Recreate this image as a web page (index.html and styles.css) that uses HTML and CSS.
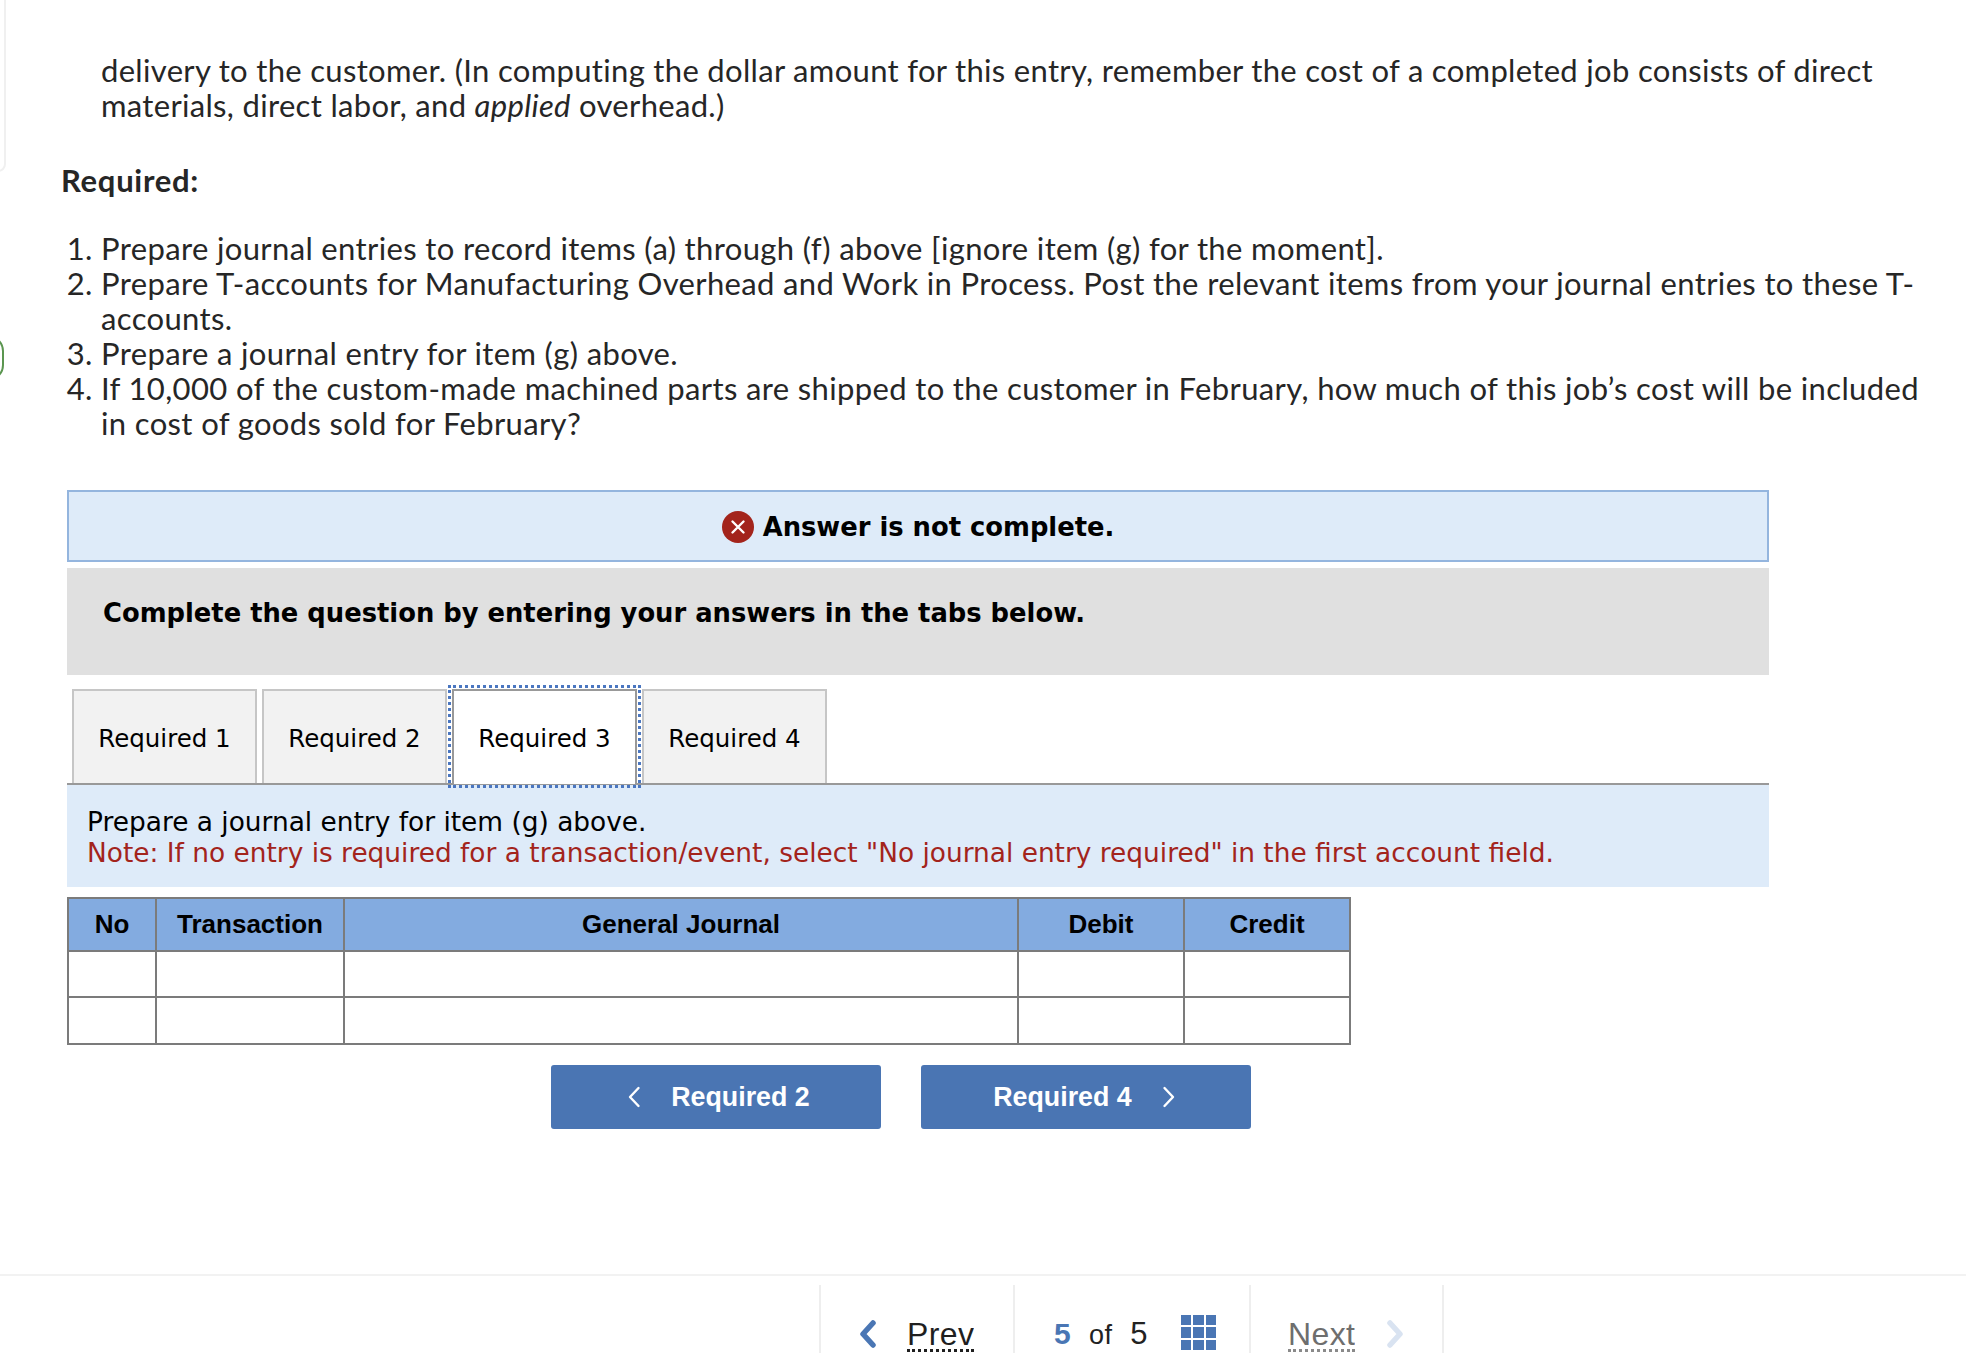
FILE: index.html
```html
<!DOCTYPE html>
<html lang="en">
<head>
<meta charset="utf-8">
<title>Required</title>
<link rel="stylesheet" href="styles.css">
</head>
<body>
<div class="edge-box"></div>
<div class="edge-arc"></div>
<main class="page">
  <p class="lead">delivery to the customer. (In computing the dollar amount for this entry, remember the cost of a completed job consists of direct<br>materials, direct labor, and <em>applied</em> overhead.)</p>
  <h2 class="req-title">Required:</h2>
  <ol class="req-list">
    <li>Prepare journal entries to record items (a) through (f) above [ignore item (g) for the moment].</li>
    <li>Prepare T-accounts for Manufacturing Overhead and Work in Process. Post the relevant items from your journal entries to these T-<br>accounts.</li>
    <li>Prepare a journal entry for item (g) above.</li>
    <li>If 10,000 of the custom-made machined parts are shipped to the customer in February, how much of this job’s cost will be included<br>in cost of goods sold for February?</li>
  </ol>
  <section class="panel">
    <div class="alert">
      <svg class="alert-icon" viewBox="0 0 32 32" aria-hidden="true"><circle cx="16" cy="16" r="16" fill="#a3241c"/><path d="M10.500 10.500l11 11M21.500 10.500l-11 11" stroke="#fff" stroke-width="2.400" stroke-linecap="round" fill="none"/></svg>
      <span>Answer is not complete.</span>
    </div>
    <div class="instruction">Complete the question by entering your answers in the tabs below.</div>
    <div class="tabs">
      <div class="tab">Required 1</div>
      <div class="tab">Required 2</div>
      <div class="tab tab-active">Required 3</div>
      <div class="tab">Required 4</div>
    </div>
    <div class="band">
      <div>Prepare a journal entry for item (g) above.</div>
      <div class="note">Note: If no entry is required for a transaction/event, select "No journal entry required" in the first account field.</div>
    </div>
    <table class="journal">
      <thead>
        <tr><th class="c-no">No</th><th class="c-tr">Transaction</th><th class="c-gj">General Journal</th><th class="c-amt">Debit</th><th class="c-amt">Credit</th></tr>
      </thead>
      <tbody>
        <tr><td></td><td></td><td></td><td></td><td></td></tr>
        <tr><td></td><td></td><td></td><td></td><td></td></tr>
      </tbody>
    </table>
    <div class="btn-row">
      <a class="btn btn-prev"><svg class="btn-chev" viewBox="0 0 14 22" aria-hidden="true"><path d="M11.500 2L3 11l8.500 9" fill="none" stroke="#fff" stroke-width="2.400" stroke-linecap="round" stroke-linejoin="round"/></svg><span>Required 2</span></a>
      <a class="btn btn-next"><span>Required 4</span><svg class="btn-chev" viewBox="0 0 14 22" aria-hidden="true"><path d="M2.500 2L11 11l-8.500 9" fill="none" stroke="#fff" stroke-width="2.400" stroke-linecap="round" stroke-linejoin="round"/></svg></a>
    </div>
  </section>
  <footer class="footer">
    <div class="foot-cell foot-prev">
      <svg class="foot-chev" viewBox="0 0 18 28" aria-hidden="true"><path d="M14 3L4 14l10 11" fill="none" stroke="#4a76b4" stroke-width="5.500" stroke-linecap="round" stroke-linejoin="round"/></svg>
      <span class="foot-link">Prev</span>
    </div>
    <div class="foot-cell foot-count">
      <b class="count-now">5</b><span class="count-of">of</span><span class="count-all">5</span>
      <span class="grid-icon" aria-hidden="true"><i></i><i></i><i></i><i></i><i></i><i></i><i></i><i></i><i></i></span>
    </div>
    <div class="foot-cell foot-next">
      <span class="foot-link foot-link-off">Next</span>
      <svg class="foot-chev" viewBox="0 0 18 28" aria-hidden="true"><path d="M4 3l10 11L4 25" fill="none" stroke="#d9e3f1" stroke-width="5.500" stroke-linecap="round" stroke-linejoin="round"/></svg>
    </div>
  </footer>
</main>
</body>
</html>
```

FILE: styles.css
```css
html, body {
  margin: 0;
  padding: 0;
  height: 1353px;
  overflow: hidden;
  background: #fff;
}
body {
  position: relative;
  font-family: "Lato", "Liberation Sans", sans-serif;
  color: #262626;
}
.edge-box {
  position: absolute;
  left: -20px;
  top: -10px;
  width: 22px;
  height: 178px;
  border: 2px solid #f0f0f0;
  border-radius: 8px;
}
.edge-arc {
  position: absolute;
  left: -40px;
  top: 335px;
  width: 44px;
  height: 46px;
  border: 2px solid #5b9650;
  border-radius: 16px;
  box-sizing: border-box;
}
.page {
  padding-top: 53px;
  font-size: 31px;
  line-height: 35px;
  letter-spacing: 0.36px;
}
.lead {
  margin: 0;
  padding-left: 101px;
  white-space: nowrap;
  letter-spacing: 0.32px;
}
.req-title {
  margin: 40px 0 33px 61px;
  font-size: 31px;
  line-height: 35px;
  font-weight: 700;
  letter-spacing: 0.7px;
}
.req-list {
  margin: 0 0 49px;
  padding-left: 101px;
  white-space: nowrap;
}
.panel {
  margin-left: 67px;
  width: 1702px;
  letter-spacing: 0;
}
.alert {
  display: flex;
  align-items: center;
  justify-content: center;
  gap: 9px;
  box-sizing: border-box;
  height: 72px;
  padding: 2px 0 0;
  background: #deebf9;
  border: 2px solid #94b5de;
  font-family: "DejaVu Sans", sans-serif;
  font-weight: 700;
  font-size: 25.800px;
  color: #000;
}
.alert-icon {
  width: 32px;
  height: 32px;
}
.instruction {
  margin-top: 6px;
  box-sizing: border-box;
  height: 107px;
  padding: 26px 36px 0;
  background: #e0e0e0;
  font-family: "DejaVu Sans", sans-serif;
  font-weight: 700;
  font-size: 25.800px;
  line-height: 38px;
  color: #000;
}
.tabs {
  display: flex;
  gap: 5px;
  margin-top: 14px;
  padding-left: 5px;
  border-bottom: 2px solid #999;
  height: 94px;
}
.tab {
  box-sizing: border-box;
  width: 185px;
  height: 94px;
  padding-top: 2px;
  display: flex;
  align-items: center;
  justify-content: center;
  background: #f2f2f2;
  border: 2px solid #c6c6c6;
  border-bottom: 0;
  font-family: "DejaVu Sans", sans-serif;
  font-size: 24.500px;
  color: #000;
}
.tab-active {
  height: 95px;
  padding-bottom: 1px;
  background: #fff;
  border-color: #999;
  outline: 3px dotted #4a76c0;
  outline-offset: 1px;
  position: relative;
}
.band {
  box-sizing: border-box;
  height: 102px;
  padding: 21px 20px 0;
  background: #deebf9;
  font-family: "DejaVu Sans", sans-serif;
  font-size: 26.400px;
  line-height: 31px;
  color: #000;
}
.note {
  color: #a3241c;
}
.journal {
  margin-top: 10px;
  width: 1282px;
  table-layout: fixed;
  border-collapse: collapse;
  font-family: "Liberation Sans", Arial, sans-serif;
}
.journal th, .journal td {
  box-sizing: border-box;
  border: 2px solid #7b7b7b;
  padding: 0;
}
.journal th {
  height: 53px;
  background: #83abe0;
  font-size: 26px;
  font-weight: 700;
  color: #000;
}
.journal td {
  height: 46px;
}
.journal tr:last-child td {
  height: 47px;
}
.c-no { width: 88px; }
.c-tr { width: 188px; }
.c-gj { width: 674px; }
.c-amt { width: 166px; }
.btn-row {
  display: flex;
  gap: 40px;
  margin-top: 20px;
  margin-left: 484px;
}
.btn {
  box-sizing: border-box;
  width: 330px;
  height: 64px;
  display: flex;
  align-items: center;
  justify-content: center;
  gap: 30px;
  background: #4a75b3;
  border-radius: 3px;
  color: #fff;
  font-family: "Liberation Sans", Arial, sans-serif;
  font-weight: 700;
  font-size: 26.800px;
}
.btn-prev { padding-left: 5px; }
.btn-next { padding-right: 3px; }
.btn-chev {
  width: 14px;
  height: 22px;
}
.footer {
  margin-top: 145px;
  border-top: 2px solid #f2f2f2;
  padding: 9px 0 0 819px;
  display: flex;
  height: 120px;
}
.foot-cell {
  box-sizing: border-box;
  border-left: 2px solid #eeeeee;
  display: flex;
  align-items: flex-start;
  padding-top: 31px;
  font-family: "Liberation Sans", Arial, sans-serif;
}
.foot-prev { width: 194px; padding-left: 38px; gap: 30px; }
.foot-count { width: 236px; padding-left: 39px; }
.foot-next { width: 195px; padding-left: 37px; gap: 31px; border-right: 2px solid #eeeeee; }
.foot-chev {
  width: 18px;
  height: 28px;
  margin-top: 4px;
}
.foot-link {
  font-size: 32px;
  line-height: 36px;
  color: #1f1f1f;
  border-bottom: 3px dotted #1f1f1f;
  height: 33px;
  overflow: hidden;
}
.foot-link-off {
  color: #6e6e6e;
  border-bottom-color: #8a8a8a;
}
.count-now {
  color: #4a76b4;
  font-size: 30px;
  line-height: 36px;
}
.count-of {
  margin-left: 18px;
  font-size: 27px;
  line-height: 38px;
  color: #222;
}
.count-all {
  margin-left: 18px;
  font-size: 31px;
  line-height: 36px;
  color: #222;
}
.grid-icon {
  margin: -1px 0 0 33px;
  width: 35px;
  height: 35px;
  display: grid;
  grid-template-columns: repeat(3, 1fr);
  grid-template-rows: repeat(3, 1fr);
  gap: 2px;
}
.grid-icon i {
  background: #4a76b4;
}
```
